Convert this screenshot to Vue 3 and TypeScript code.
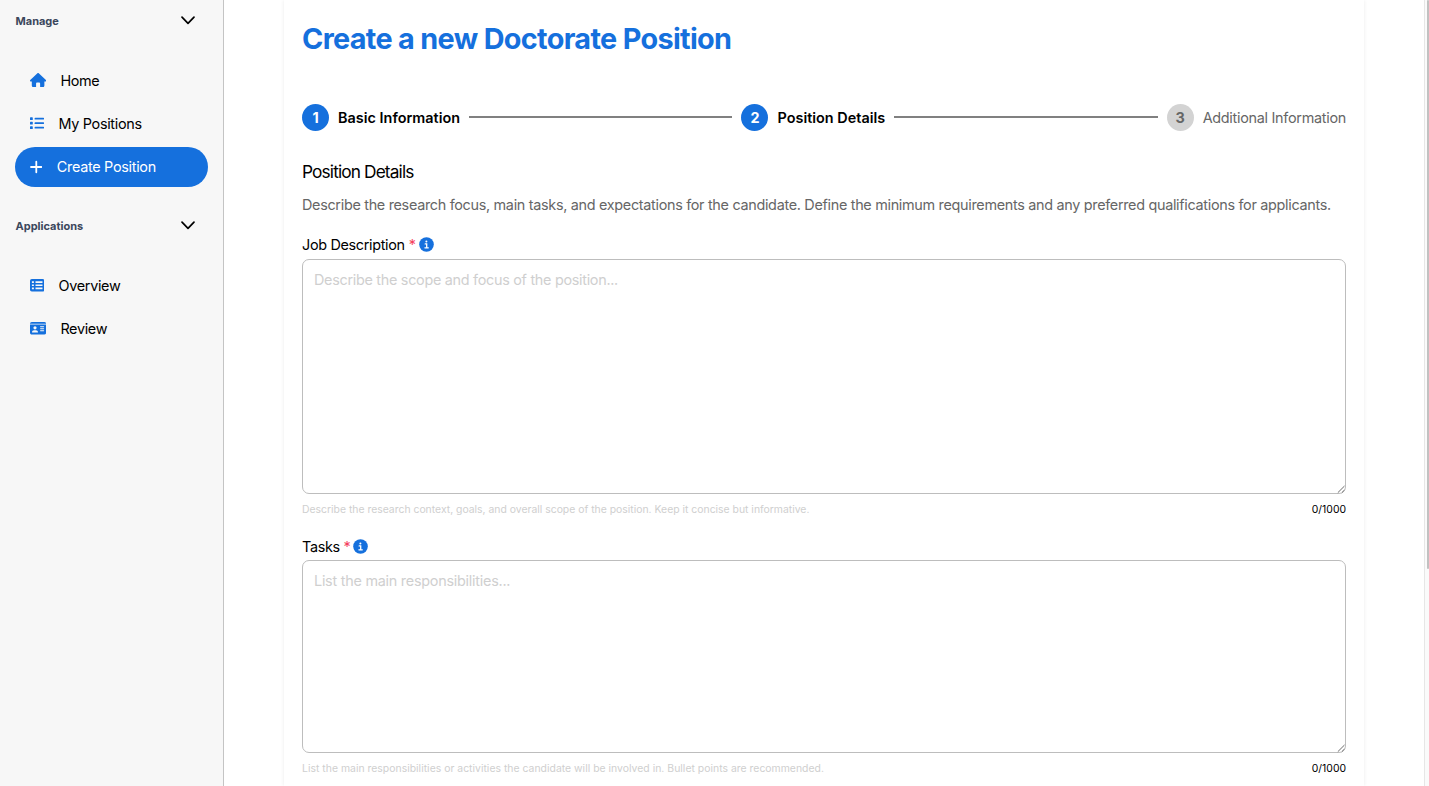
<script setup lang="ts">
import { ref } from 'vue'

type IconName = 'home' | 'list' | 'plus' | 'table' | 'card'

interface NavItem {
  label: string
  icon: IconName
  active?: boolean
}

interface NavGroup {
  title: string
  items: NavItem[]
}

interface Field {
  id: string
  label: string
  placeholder: string
  hint: string
}

const groups: NavGroup[] = [
  {
    title: 'Manage',
    items: [
      { label: 'Home', icon: 'home' },
      { label: 'My Positions', icon: 'list' },
      { label: 'Create Position', icon: 'plus', active: true },
    ],
  },
  {
    title: 'Applications',
    items: [
      { label: 'Overview', icon: 'table' },
      { label: 'Review', icon: 'card' },
    ],
  },
]

const steps = ['Basic Information', 'Position Details', 'Additional Information']
const currentStep = 2

const fields: Field[] = [
  {
    id: 'description',
    label: 'Job Description',
    placeholder: 'Describe the scope and focus of the position...',
    hint: 'Describe the research context, goals, and overall scope of the position. Keep it concise but informative.',
  },
  {
    id: 'tasks',
    label: 'Tasks',
    placeholder: 'List the main responsibilities...',
    hint: 'List the main responsibilities or activities the candidate will be involved in. Bullet points are recommended.',
  },
]

const values = ref<Record<string, string>>({ description: '', tasks: '' })
</script>

<template>
  <div class="shell">
    <aside class="sidebar">
      <section v-for="group in groups" :key="group.title" class="group">
        <header class="group-head">
          <span>{{ group.title }}</span>
          <svg class="chevron" width="14" height="9" viewBox="0 0 14 9">
            <path d="M1 1.1 7 7.3 13 1.1" fill="none" stroke="#000" stroke-width="1.7" stroke-linecap="round" stroke-linejoin="round" />
          </svg>
        </header>
        <nav class="items">
          <a v-for="item in group.items" :key="item.label" class="item" :class="{ active: item.active }">
            <svg v-if="item.icon === 'home'" width="16.2" height="14.4" viewBox="0 0 576 512" fill="currentColor">
              <path d="M311 10c-13-12-33-12-46 0L9 250c-9 9-12 22-7 34s16 20 30 20h32v144c0 35 29 64 64 64h88V376c0-22 18-40 40-40h64c22 0 40 18 40 40v136h88c35 0 64-29 64-64V304h32c14 0 25-8 30-20s2-25-7-34z" />
            </svg>
            <svg v-else-if="item.icon === 'list'" width="14.4" height="14.4" viewBox="0 0 14.4 14.4" fill="currentColor">
              <rect x="0" y="1.3" width="2.8" height="2.8" rx=".6" />
              <rect x="0" y="5.8" width="2.8" height="2.8" rx=".6" />
              <rect x="0" y="10.3" width="2.8" height="2.8" rx=".6" />
              <rect x="4.5" y="1.8" width="9.7" height="1.8" rx=".9" />
              <rect x="4.5" y="6.3" width="9.7" height="1.8" rx=".9" />
              <rect x="4.5" y="10.8" width="9.7" height="1.8" rx=".9" />
            </svg>
            <svg v-else-if="item.icon === 'plus'" width="12.6" height="14.4" viewBox="0 0 12.6 14.4">
              <path d="M6.3 1.7v10.6M1 7h10.6" fill="none" stroke="currentColor" stroke-width="1.8" stroke-linecap="round" />
            </svg>
            <svg v-else-if="item.icon === 'table'" width="14.4" height="14.4" viewBox="0 0 14.4 14.4">
              <rect x="0" y=".9" width="14.4" height="12.6" rx="1.8" fill="currentColor" />
              <path d="M1.9 3.2h2v1.7h-2zM5.5 3.2h7v1.7h-7zM1.9 6.4h2v1.7h-2zM5.5 6.4h7v1.7h-7zM1.9 9.6h2v1.7h-2zM5.5 9.6h7v1.7h-7z" fill="#f7f7f7" />
            </svg>
            <svg v-else width="16.2" height="14.4" viewBox="0 0 16.2 14.4">
              <path d="M0 2.7C0 1.7.8.9 1.8.9h12.6c1 0 1.8.8 1.8 1.8z" fill="currentColor" />
              <path d="M0 3.4h16.2v8.3c0 1-.8 1.8-1.8 1.8H1.8c-1 0-1.8-.8-1.8-1.8z" fill="currentColor" />
              <g fill="#f7f7f7">
                <circle cx="5" cy="6.8" r="1.6" />
                <path d="M2 11.2c0-1.2.9-2 2-2h2c1.1 0 2 .8 2 2 0 .2-.2.4-.4.4H2.4c-.2 0-.4-.2-.4-.4z" />
                <rect x="10" y="5.3" width="4.2" height=".9" rx=".45" />
                <rect x="10" y="7.3" width="4.2" height=".9" rx=".45" />
                <rect x="10" y="9.3" width="4.2" height=".9" rx=".45" />
              </g>
            </svg>
            <span>{{ item.label }}</span>
          </a>
        </nav>
      </section>
    </aside>

    <main class="content">
      <div class="card">
        <h1>Create a new Doctorate Position</h1>

        <ol class="stepper">
          <template v-for="(step, i) in steps" :key="step">
            <li class="step" :class="{ done: i < currentStep }">
              <span class="num">{{ i + 1 }}</span>
              <span class="step-label">{{ step }}</span>
            </li>
            <li v-if="i < steps.length - 1" class="line" aria-hidden="true"></li>
          </template>
        </ol>

        <h2>Position Details</h2>
        <p class="intro">Describe the research focus, main tasks, and expectations for the candidate. Define the minimum requirements and any preferred qualifications for applicants.</p>

        <div v-for="field in fields" :key="field.id" class="field" :class="field.id">
          <label :for="field.id">
            <span class="label-text">{{ field.label }}</span>
            <span class="star">*</span>
            <svg class="info" width="15" height="15" viewBox="0 0 15 15">
              <circle cx="7.5" cy="7.5" r="7.3" fill="#1570dd" />
              <circle cx="7.4" cy="4.4" r="1" fill="#fff" />
              <path d="M6.2 6.9h1.5v3.7M5.9 10.8h3.4" fill="none" stroke="#fff" stroke-width="1.3" stroke-linecap="round" />
            </svg>
          </label>
          <div class="box">
            <textarea :id="field.id" v-model="values[field.id]" :placeholder="field.placeholder"></textarea>
            <svg class="grip" width="9" height="9" viewBox="0 0 9 9">
              <path d="M.8 7.7 7.5 1M4.8 7.7 7.5 5" fill="none" stroke="#6b6b6b" stroke-width="1" />
            </svg>
          </div>
          <div class="meta">
            <span class="hint">{{ field.hint }}</span>
            <span class="count">{{ values[field.id].length }}/1000</span>
          </div>
        </div>
      </div>
    </main>

    <div class="scrollbar"><div class="thumb"></div></div>
  </div>
</template>

<style>
html,
body {
  margin: 0;
  overflow: hidden;
  background: #fff;
}
</style>

<style scoped>
.shell {
  display: flex;
  width: 100%;
  height: 786px;
  overflow: hidden;
  box-sizing: border-box;
  font-family: Inter, 'Liberation Sans', sans-serif;
  font-size: 14.4px;
  letter-spacing: -0.32px;
  color: #000;
  background: #fff;
}
.sidebar {
  flex: none;
  width: 224px;
  box-sizing: border-box;
  padding: 0 15px;
  background: #f7f7f7;
  border-right: 1px solid #c4c4c4;
}
.group {
  padding-top: 11px;
  margin-bottom: 18px;
}
.group-head {
  display: flex;
  align-items: center;
  justify-content: space-between;
  height: 20px;
  padding: 0 13px 0 0.5px;
  font-size: 11px;
  font-weight: 700;
  letter-spacing: 0;
  color: #3b475c;
}
.chevron {
  position: relative;
  top: -0.3px;
}
.items {
  display: flex;
  flex-direction: column;
  gap: 4.2px;
  padding-top: 29.8px;
}
.item {
  display: flex;
  align-items: center;
  gap: 14.4px;
  height: 39px;
  padding-left: 14.8px;
  border-radius: 20px;
  color: #1570dd;
}
.item svg {
  flex: none;
}
.item span {
  color: #000;
}
.item.active {
  height: 39.6px;
  background: #1570dd;
  color: #fff;
}
.item.active span {
  color: #fff;
  letter-spacing: -0.29px;
}
.content {
  flex: 1;
  min-width: 0;
  padding: 0 60px;
}
.card {
  height: 100%;
  box-sizing: border-box;
  padding: 18px 18px 0;
  box-shadow: 0 0 4px rgba(0, 0, 0, 0.08);
}
h1 {
  margin: 0;
  height: 40px;
  line-height: 41px;
  font-size: 28.8px;
  font-weight: 700;
  letter-spacing: -0.66px;
  color: #1570dd;
}
.stepper {
  display: flex;
  align-items: center;
  gap: 9px;
  height: 27px;
  margin: 45.6px 0 0;
  padding: 0;
  list-style: none;
}
.step {
  display: flex;
  align-items: center;
  gap: 9px;
  white-space: nowrap;
  color: #666;
  letter-spacing: -0.28px;
}
.num {
  display: flex;
  align-items: center;
  justify-content: center;
  width: 27px;
  height: 27px;
  border-radius: 50%;
  background: #d3d3d3;
  font-weight: 700;
  letter-spacing: 0;
}
.step.done {
  font-weight: 600;
  letter-spacing: 0.02px;
  color: #000;
}
.step.done .num {
  background: #1570dd;
  color: #fff;
}
.line {
  flex: 1;
  height: 2px;
  background: #808080;
}
h2 {
  margin: 27.4px 0 0;
  height: 26px;
  line-height: 28px;
  font-size: 17.3px;
  font-weight: 400;
  letter-spacing: -0.87px;
}
.intro {
  margin: 9px 0 0;
  height: 24px;
  line-height: 24px;
  letter-spacing: -0.305px;
  white-space: nowrap;
  color: #666;
}
.field {
  margin-top: 17px;
}
.field + .field {
  margin-top: 16px;
}
label {
  display: flex;
  align-items: center;
  height: 21px;
}
.star {
  margin: 0 3.6px 0 4px;
  color: #f43f5e;
}
.tasks .star {
  margin: 0 3.2px 0 3.6px;
}
.info {
  flex: none;
}
.box {
  position: relative;
  height: 235px;
  margin-top: 4px;
}
.tasks .box {
  height: 193px;
  margin-top: 3px;
}
textarea {
  display: block;
  width: 100%;
  height: 100%;
  box-sizing: border-box;
  margin: 0;
  padding: 9px 11px;
  border: 1px solid #bdbdbd;
  border-radius: 7px;
  outline: none;
  resize: none;
  background: #fff;
  font: inherit;
  line-height: 21px;
  letter-spacing: -0.29px;
  color: #000;
}
.tasks textarea {
  letter-spacing: -0.25px;
}
textarea::placeholder {
  color: #cfcfcf;
  opacity: 1;
}
.grip {
  position: absolute;
  right: 0;
  bottom: 0;
}
.meta {
  display: flex;
  justify-content: space-between;
  height: 20px;
  margin-top: 6px;
  line-height: 20px;
  font-size: 10.4px;
  letter-spacing: 0;
}
.hint {
  color: #cfcfcf;
}
.tasks .hint {
  letter-spacing: 0.02px;
}
.scrollbar {
  flex: none;
  width: 5px;
  box-sizing: border-box;
  border-left: 1px solid #e6e6e6;
  background: #fafafa;
}
.thumb {
  width: 2px;
  height: 569px;
  margin-left: auto;
  border-radius: 2px;
  background: #c1c1c1;
}
</style>
